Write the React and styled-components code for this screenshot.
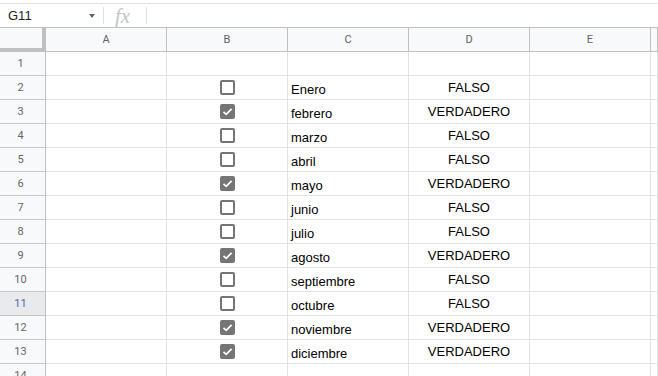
import React from 'react'
import styled, { createGlobalStyle } from 'styled-components';

const GlobalStyle = createGlobalStyle`
  * { box-sizing: border-box; }
  body {
    margin: 0;
    background: #fff;
    font-family: "Liberation Sans", Arial, sans-serif;
    overflow: hidden;
  }
`;

const months = [
    ['Enero', false],
    ['febrero', true],
    ['marzo', false],
    ['abril', false],
    ['mayo', true],
    ['junio', false],
    ['julio', false],
    ['agosto', true],
    ['septiembre', false],
    ['octubre', false],
    ['noviembre', true],
    ['diciembre', true],
];

const cols = ['A', 'B', 'C', 'D', 'E', ''];

function CheckBox({ checked }) {
    return (
        <Box checked={checked}>
            {checked && (
                <svg width="11" height="11" viewBox="0 0 11 11">
                    <path d="M1.5 5.8 L4.2 8.3 L9.6 2.8" fill="none" stroke="#fff" strokeWidth="1.7" />
                </svg>
            )}
        </Box>
    )
}

function App() {
    const rows = [['', null], ...months, ['', null]];

    return (
        <Page>
            <GlobalStyle />
            <TopStrip />
            <FormulaBar>
                <NameBox>G11</NameBox>
                <Caret />
                <Divider />
                <Fx>fx</Fx>
                <Divider />
            </FormulaBar>

            <Sheet>
                <Corner />
                {cols.map((c, i) => (
                    <ColHead key={i}>{c}</ColHead>
                ))}

                {rows.map(([label, checked], i) => {
                    const n = i + 1;
                    const isData = checked !== null;
                    return (
                        <React.Fragment key={n}>
                            <RowHead selected={n === 11}>{n}</RowHead>
                            <Cell />
                            <Cell $center>{isData && <CheckBox checked={checked} />}</Cell>
                            <Cell>{label}</Cell>
                            <Cell $align="center" $lift>{isData ? (checked ? 'VERDADERO' : 'FALSO') : ''}</Cell>
                            <Cell />
                            <Cell />
                        </React.Fragment>
                    )
                })}
            </Sheet>
        </Page>
    )
}

const Page = styled.div`
    width: 658px;
    height: 376px;
    overflow: hidden;
`;

const TopStrip = styled.div`
    height: 4px;
    border-bottom: 1px solid #e1e1e1;
`;

const FormulaBar = styled.div`
    height: 23px;
    display: flex;
    align-items: center;
`;

const NameBox = styled.div`
    width: 89px;
    padding-left: 8px;
    font-size: 13px;
    color: #222;
`;

const Caret = styled.div`
    width: 0;
    height: 0;
    margin-right: 8px;
    border-left: 3.5px solid transparent;
    border-right: 3.5px solid transparent;
    border-top: 4px solid #5f6368;
`;

const Divider = styled.div`
    width: 1px;
    height: 17px;
    background: #e0e0e0;
`;

const Fx = styled.div`
    width: 42px;
    padding-left: 11px;
    font-family: "Liberation Serif", "Times New Roman", serif;
    font-style: italic;
    font-size: 21px;
    line-height: 20px;
    color: #c4c4c4;
`;

const Sheet = styled.div`
    display: grid;
    grid-template-columns: 46px repeat(5, 121px) 1fr;
    grid-auto-rows: 24px;
    border-top: 1px solid #c0c0c0;
`;

const Corner = styled.div`
    background: #f8f9fa;
    border-right: 4px solid #c0c0c0;
    border-bottom: 4px solid #c0c0c0;
`;

const ColHead = styled.div`
    background: #f8f9fa;
    border-right: 1px solid #c0c0c0;
    border-bottom: 1px solid #c0c0c0;
    display: flex;
    align-items: center;
    justify-content: center;
    font-family: Roboto, "Liberation Sans", sans-serif;
    font-size: 11px;
    color: #5f6368;
`;

const RowHead = styled.div`
    background: ${p => (p.selected ? '#e8eaed' : '#f8f9fa')};
    border-right: 1px solid #c0c0c0;
    border-bottom: 1px solid #c4c7c5;
    display: flex;
    align-items: center;
    justify-content: center;
    padding-right: 4px;
    font-family: Roboto, "Liberation Sans", sans-serif;
    font-size: 11px;
    color: ${p => (p.selected ? '#4a6fa5' : '#666')};
`;

const Cell = styled.div`
    border-right: 1px solid #e2e3e3;
    border-bottom: 1px solid #e2e3e3;
    display: flex;
    align-items: ${p => (p.$center ? 'center' : 'flex-end')};
    justify-content: ${p => (p.$center || p.$align === 'center' ? 'center' : 'flex-start')};
    padding: 0 3px ${p => (p.$lift ? '3px' : '1px')} 3px;
    font-size: 13px;
    line-height: 16px;
    color: #000;
    white-space: nowrap;
    overflow: hidden;
`;

const Box = styled.div`
    width: 15px;
    height: 15px;
    margin-top: 1px;
    border-radius: 2px;
    border: 2px solid #757575;
    background: ${p => (p.checked ? '#757575' : '#fff')};
    display: flex;
    align-items: center;
    justify-content: center;
`;

export default App
